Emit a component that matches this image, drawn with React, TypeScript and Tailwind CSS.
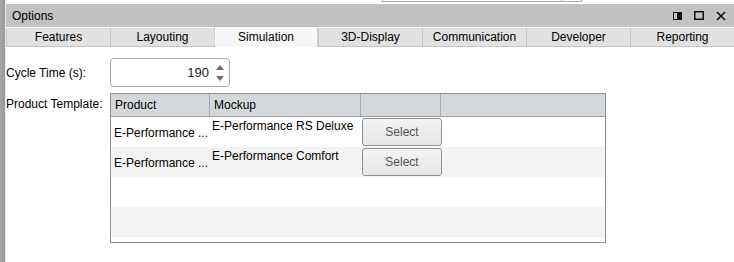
import React from "react";

const tabs = [
  "Features",
  "Layouting",
  "Simulation",
  "3D-Display",
  "Communication",
  "Developer",
  "Reporting",
];

const rows = [
  { product: "E-Performance ...", mockup: "E-Performance RS Deluxe", button: true },
  { product: "E-Performance ...", mockup: "E-Performance Comfort", button: true },
  { product: "", mockup: "", button: false },
  { product: "", mockup: "", button: false },
];

function Spinner() {
  return (
    <div className="flex h-[29px] w-[120px] items-center rounded-[4px] border border-[#a9a9a9] bg-white">
      <span className="flex-1 pr-[4px] text-right text-[13px] text-[#222]">190</span>
      <div className="flex w-[16px] flex-col items-center gap-[6px] pr-[2px]">
        <svg width="8" height="5" viewBox="0 0 8 5">
          <path d="M0 5 L4 0 L8 5 Z" fill="#6e6e6e" />
        </svg>
        <svg width="8" height="5" viewBox="0 0 8 5">
          <path d="M0 0 L8 0 L4 5 Z" fill="#6e6e6e" />
        </svg>
      </div>
    </div>
  );
}

function SelectButton() {
  return (
    <div className="mx-[0px] my-[1px] flex h-[28px] w-[80px] items-center justify-center rounded-[3px] border border-[#89939b] bg-gradient-to-b from-[#f4f4f4] to-[#e6e6e6] text-[12px] text-[#555]">
      Select
    </div>
  );
}

function TemplateTable() {
  return (
    <div className="flex h-[150px] w-[496px] flex-col border border-[#8c9096] bg-white">
      <div className="flex h-[23px] border-b border-[#9a9ea3] bg-[#d5d8db] text-[12px] text-black">
        <div className="flex w-[99px] items-center border-r border-[#a6aaaf] pl-[4px]">Product</div>
        <div className="flex w-[151px] items-center border-r border-[#a6aaaf] pl-[4px]">Mockup</div>
        <div className="w-[80px] border-r border-[#a6aaaf]" />
        <div className="flex-1" />
      </div>
      {rows.map((r, i) => (
        <div
          key={i}
          className={`flex h-[30px] text-[12px] text-black ${i % 2 === 1 ? "bg-[#f3f3f3]" : "bg-white"}`}
        >
          <div className="flex w-[100px] items-center pl-[3px] pt-[2px]">{r.product}</div>
          <div className="w-[151px] pl-[1px] pt-[1px] leading-[16px]">{r.mockup}</div>
          <div className="w-[80px]">{r.button && <SelectButton />}</div>
          <div className="flex-1" />
        </div>
      ))}
    </div>
  );
}

export default function App() {
  return (
    <div
      className="flex h-[262px] w-[734px] overflow-hidden bg-white"
      style={{ fontFamily: '"Liberation Sans", Arial, sans-serif' }}
    >
      {/* background window edge */}
      <div className="flex w-[6px] flex-col">
        <div className="flex flex-1">
          <div className="w-[2px] bg-[#a4a4a4]" />
          <div className="w-[3px] bg-[#9c9c9c]" />
          <div className="w-[1px] bg-[#e9e9e9]" />
        </div>
      </div>

      <div className="flex flex-1 flex-col">
        <div className="h-[4px] bg-white">
          <div className="ml-[376px] flex h-[2px] w-[200px] border-b border-l border-r border-[#a8a8a8]">
            <div className="flex-1" />
            <div className="w-[20px] border-l border-[#c8c8c8]" />
          </div>
        </div>

        <div className="flex h-[23px] items-center bg-[#c2c2c2] pl-[6px] pr-[8px] text-[12px] text-black">
          <span className="flex-1">Options</span>
          <div className="flex items-center gap-[12px]">
            <svg width="9" height="8" viewBox="0 0 9 8">
              <rect x="0.5" y="0.5" width="8" height="7" fill="none" stroke="#111" />
              <rect x="4" y="1" width="4" height="6" fill="#111" />
            </svg>
            <svg width="10" height="9" viewBox="0 0 10 9">
              <rect x="0.75" y="0.75" width="8.5" height="7.5" fill="none" stroke="#111" strokeWidth="1.5" />
            </svg>
            <svg width="10" height="10" viewBox="0 0 10 10">
              <path d="M1 1 L9 9 M9 1 L1 9" stroke="#111" strokeWidth="1.6" />
            </svg>
          </div>
        </div>

        <div className="flex h-[20px] bg-white">
          {tabs.map((t) => {
            const active = t === "Simulation";
            return (
              <div
                key={t}
                className={
                  active
                    ? "flex w-[104px] items-center justify-center border-x border-[#d0d0d0] bg-[#f7f7f7] text-[12px] text-black"
                    : "mt-[1px] flex w-[104px] items-center justify-center border-b border-l border-[#c4c4c4] bg-[#e1e1e1] text-[12px] text-black"
                }
              >
                {t}
              </div>
            );
          })}
        </div>

        <div className="flex flex-1 flex-col bg-white pt-[11px]">
          <div className="flex items-center">
            <div className="w-[104px] text-[12px] text-black">Cycle Time (s):</div>
            <Spinner />
          </div>
          <div className="mt-[6px] flex">
            <div className="w-[104px] pt-[2px] text-[12px] text-black">Product Template:</div>
            <TemplateTable />
          </div>
        </div>
      </div>
    </div>
  );
}
